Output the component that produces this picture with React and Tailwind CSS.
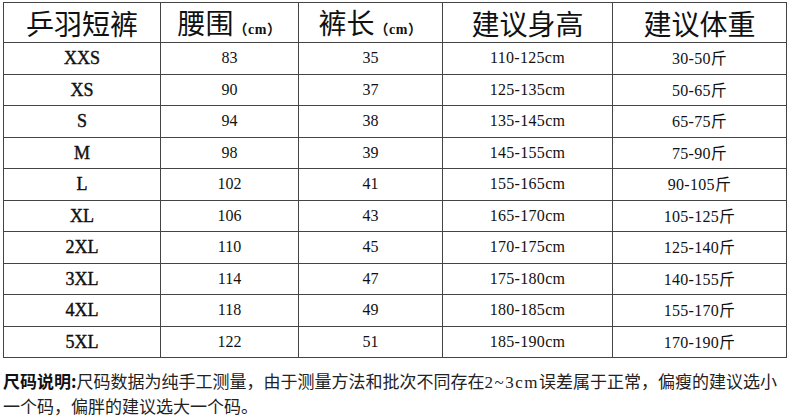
const serif = "font-['Liberation_Serif','Noto_Sans_CJK_SC',serif]";
const cjk = "font-['Noto_Sans_CJK_SC',sans-serif]";

const rows = [
  ["XXS", "83", "35", "110-125cm", "30-50斤"],
  ["XS", "90", "37", "125-135cm", "50-65斤"],
  ["S", "94", "38", "135-145cm", "65-75斤"],
  ["M", "98", "39", "145-155cm", "75-90斤"],
  ["L", "102", "41", "155-165cm", "90-105斤"],
  ["XL", "106", "43", "165-170cm", "105-125斤"],
  ["2XL", "110", "45", "170-175cm", "125-140斤"],
  ["3XL", "114", "47", "175-180cm", "140-155斤"],
  ["4XL", "118", "49", "180-185cm", "155-170斤"],
  ["5XL", "122", "51", "185-190cm", "170-190斤"],
];

function Weight({ text }) {
  // split the 斤 so it can use the CJK font
  const num = text.replace("斤", "");
  return (
    <>
      {num}
      <span className={cjk}>斤</span>
    </>
  );
}

const cell = `border border-[#444] p-0 text-center leading-none`;

export default function App() {
  return (
    <div className="h-[418px] w-[790px] overflow-hidden bg-white pl-[3px] pt-[2px] text-[#111]">
      <table className="w-[783px] table-fixed border-collapse">
        <colgroup>
          <col className="w-[157px]" />
          <col className="w-[138px]" />
          <col className="w-[144px]" />
          <col className="w-[170px]" />
          <col className="w-[174px]" />
        </colgroup>
        <thead>
          <tr className="h-[40px]">
            <th className={`${cell} text-[28px] font-normal ${cjk}`}>乒羽短裤</th>
            <th className={`${cell} text-[28px] font-normal ${cjk}`}>
              腰围<span className={`text-[14px] font-bold tracking-[0.5px] ${serif}`}>（cm）</span>
            </th>
            <th className={`${cell} text-[28px] font-normal ${cjk}`}>
              裤长<span className={`text-[14px] font-bold tracking-[0.5px] ${serif}`}>（cm）</span>
            </th>
            <th className={`${cell} text-[28px] font-normal ${cjk}`}>建议身高</th>
            <th className={`${cell} text-[28px] font-normal ${cjk}`}>建议体重</th>
          </tr>
        </thead>
        <tbody>
          {rows.map((r) => (
            <tr key={r[0]} className="h-[31.5px]">
              <td className={`${cell} text-[18px] [-webkit-text-stroke:0.4px_#111] ${serif}`}>{r[0]}</td>
              <td className={`${cell} text-[16px] ${serif}`}>{r[1]}</td>
              <td className={`${cell} text-[16px] ${serif}`}>{r[2]}</td>
              <td className={`${cell} text-[16px] tracking-[0.3px] ${serif}`}>{r[3]}</td>
              <td className={`${cell} text-[16px] tracking-[0.3px] ${serif}`}>
                <Weight text={r[4]} />
              </td>
            </tr>
          ))}
        </tbody>
      </table>
      <p className={`whitespace-nowrap pt-[11px] text-[17px] leading-[23px] text-[#222] ${cjk}`}>
        <span className="font-bold text-[#111]">尺码说明:</span>
        尺码数据为纯手工测量，由于测量方法和批次不同存在
        <span className={`tracking-[1.5px] ${serif}`}>2~3cm</span>
        误差属于正常，偏瘦的建议选小
        <br />
        一个码，偏胖的建议选大一个码。
      </p>
    </div>
  );
}
